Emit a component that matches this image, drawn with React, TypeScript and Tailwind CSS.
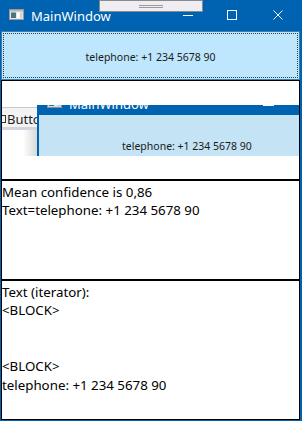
import React from "react";

const font = { fontFamily: "'Noto Sans', 'Open Sans', sans-serif" };

function WindowIcon() {
  return (
    <svg width="15" height="11" viewBox="0 0 15 11" className="block">
      <rect x="0.5" y="0.5" width="14" height="10" fill="#e6e6e6" stroke="#9a9a9a" />
      <rect x="1" y="1" width="13" height="1.5" fill="#b8b8b8" />
      <rect x="2" y="3.5" width="5" height="5.5" fill="#4a7480" />
      <rect x="8" y="3.5" width="2.5" height="5.5" fill="#ffffff" />
      <rect x="11" y="3.5" width="2.5" height="5.5" fill="#cfd6d8" />
    </svg>
  );
}

function TitleBar() {
  return (
    <div className="relative flex h-[31px] w-full shrink-0 items-start bg-[#0063b1] text-white">
      <div className="ml-[9px] mt-[9px]">
        <WindowIcon />
      </div>
      <span className="ml-[7px] mt-[8px] text-[13px] leading-[16px]" style={font}>
        MainWindow
      </span>
      <div className="ml-auto mr-px flex h-full">
        <div className="flex w-[46px] items-start justify-center pl-[4px] pt-[15px]">
          <div className="h-px w-[10px] bg-white" />
        </div>
        <div className="flex w-[46px] items-start justify-center pt-[10px]">
          <div className="h-[10px] w-[10px] border border-white" />
        </div>
        <div className="flex w-[46px] items-start justify-center pt-[10px]">
          <svg width="10" height="10" viewBox="0 0 10 10" className="block">
            <path d="M0.5 0.5 L9.5 9.5 M9.5 0.5 L0.5 9.5" stroke="#fff" strokeWidth="1" />
          </svg>
        </div>
      </div>

      {/* docked drag handle overlay */}
      <div className="absolute left-[99px] top-0 flex h-[12px] w-[104px] flex-col items-center border border-[#8a8a8a] bg-[#eeedf2] pt-[4px]">
        <div className="h-px w-[24px] bg-[#9a9a9a]" />
        <div className="mt-px h-px w-[24px] bg-[#9a9a9a]" />
      </div>
    </div>
  );
}

function NestedCapture() {
  return (
    <div className="mt-[24px] flex h-[51px] w-full">
      {/* designer toolbox sliver */}
      <div className="flex w-[35px] shrink-0 flex-col pt-[2px]">
        <div className="flex h-[20px] items-center overflow-hidden border-t border-[#c8c8c8] bg-[#f3f3f3] pt-[2px]">
          <div className="h-[8px] w-[4px] shrink-0 border-y border-r border-[#333]" />
          <span className="ml-[1px] whitespace-nowrap text-[13px] leading-[16px] text-[#1e1e1e]" style={font}>
            Button
          </span>
        </div>
        <div className="h-[3px] bg-[#d4d4dc]" />
        <div className="flex-1 bg-gradient-to-r from-white from-60% to-[#d8d8d8]" />
      </div>

      {/* captured window */}
      <div className="flex flex-1 flex-col border-l-2 border-[#0063b1]">
        <div className="relative h-[14px] overflow-hidden bg-[#0063b1]">
          <div className="-mt-[17px] flex items-start text-white">
            <div className="ml-[8px] mt-[9px] opacity-90">
              <WindowIcon />
            </div>
            <span className="ml-[7px] mt-[8px] text-[13px] leading-[16px]" style={font}>
              MainWindow
            </span>
          </div>
          <div className="absolute left-[224px] top-0 h-px w-[11px] bg-white" />
        </div>
        <div className="flex-1 bg-[#c4e4f5] pl-[83px] pt-[17px]">
          <span className="whitespace-nowrap text-[10.5px] leading-[14px] text-[#1a1a1a]" style={font}>
            telephone: +1 234 5678 90
          </span>
        </div>
      </div>
    </div>
  );
}

export default function App() {
  return (
    <div className="flex h-[421px] w-[302px] flex-col overflow-hidden bg-[#0063b1]">
      <TitleBar />
      <div className="mb-px ml-px mr-[2px] flex flex-1 flex-col bg-white">
        {/* focused button */}
        <div className="h-[49px] shrink-0 border border-[#3c7fb1] bg-[#bee6fd] p-px">
          <div className="flex h-full items-center justify-center border border-dotted border-[#3a3a3a] pt-[2px]">
            <span className="text-[10.5px] leading-[14px] text-[#1a1a1a]" style={font}>
              telephone: +1 234 5678 90
            </span>
          </div>
        </div>

        {/* image */}
        <div className="h-[100px] shrink-0 overflow-hidden border border-black bg-white">
          <NestedCapture />
        </div>

        {/* result text */}
        <div className="h-[100px] shrink-0 border border-black pt-[1.5px] text-[13.3px] leading-[18.7px] text-black" style={font}>
          <p>Mean confidence is 0,86</p>
          <p>Text=telephone: +1 234 5678 90</p>
        </div>

        {/* iterator text */}
        <div className="flex-1 border border-black pt-[1.5px] text-[13.3px] leading-[18.7px] text-black" style={font}>
          <p>Text (iterator):</p>
          <p>&lt;BLOCK&gt;</p>
          <p>&nbsp;</p>
          <p>&nbsp;</p>
          <p>&lt;BLOCK&gt;</p>
          <p>telephone: +1 234 5678 90</p>
        </div>
      </div>
    </div>
  );
}
